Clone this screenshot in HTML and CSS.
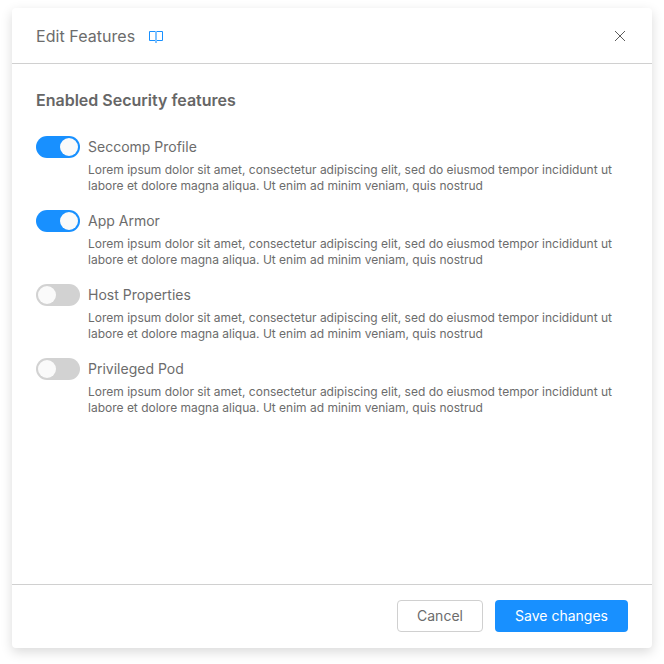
FILE: index.html
```html
<!DOCTYPE html>
<html lang="en">
<head>
<meta charset="utf-8">
<title>Edit Features</title>
<link rel="stylesheet" href="styles.css">
</head>
<body>
<section class="modal">
  <header class="modal-header">
    <h1 class="title">Edit Features</h1>
    <svg class="book" viewBox="0 0 16 16" width="16" height="16"><path d="M7 3.500H1.500v9H7M9 3.500h5.500v9H9"/><path class="spine" d="M8 3v12"/></svg>
    <svg class="close" viewBox="0 0 16 16" width="16" height="16"><path d="M3 3l10 10M13 3L3 13"/></svg>
  </header>
  <main class="modal-body">
    <h2 class="heading">Enabled Security features</h2>
    <div class="feature">
      <span class="switch on"></span>
      <div><h3 class="name">Seccomp Profile</h3><p class="text">Lorem ipsum dolor sit amet, consectetur adipiscing elit, sed do eiusmod tempor incididunt ut<br>labore et dolore magna aliqua. Ut enim ad minim veniam, quis nostrud</p></div>
    </div>
    <div class="feature">
      <span class="switch on"></span>
      <div><h3 class="name">App Armor</h3><p class="text">Lorem ipsum dolor sit amet, consectetur adipiscing elit, sed do eiusmod tempor incididunt ut<br>labore et dolore magna aliqua. Ut enim ad minim veniam, quis nostrud</p></div>
    </div>
    <div class="feature">
      <span class="switch"></span>
      <div><h3 class="name">Host Properties</h3><p class="text">Lorem ipsum dolor sit amet, consectetur adipiscing elit, sed do eiusmod tempor incididunt ut<br>labore et dolore magna aliqua. Ut enim ad minim veniam, quis nostrud</p></div>
    </div>
    <div class="feature">
      <span class="switch"></span>
      <div><h3 class="name">Privileged Pod</h3><p class="text">Lorem ipsum dolor sit amet, consectetur adipiscing elit, sed do eiusmod tempor incididunt ut<br>labore et dolore magna aliqua. Ut enim ad minim veniam, quis nostrud</p></div>
    </div>
  </main>
  <footer class="modal-footer">
    <button class="btn cancel">Cancel</button>
    <button class="btn save">Save changes</button>
  </footer>
</section>
</body>
</html>
```
FILE: styles.css
```css
* { box-sizing: border-box; margin: 0; padding: 0; }
body { min-height: 664px; padding: 8px 12px 16px; background: #fff; font-family: Inter, sans-serif; color: #6c6c6c; }
.modal { width: 640px; height: 640px; display: flex; flex-direction: column; background: #fff; border-radius: 4px; box-shadow: 0 4px 12px rgba(0,0,0,.15); }
.modal-header { height: 56px; padding: 1px 24px 0; display: flex; align-items: center; border-bottom: 1px solid #d0d0d0; }
.title { width: 99px; white-space: nowrap; font-size: 16px; line-height: 24px; font-weight: 400; letter-spacing: .05px; }
.book { margin-left: 13px; fill: none; stroke: #1890ff; stroke-width: 1; }
.spine { stroke-width: 2; stroke-opacity: .55; }
.close { margin-left: auto; fill: none; stroke: #5c5c5c; stroke-width: 1; }
.modal-body { flex: 1; padding: 24px; }
.heading { font-size: 16px; line-height: 24px; font-weight: 600; margin-bottom: 24px; color: #666; }
.feature { display: flex; gap: 8px; margin-bottom: 16px; }
.switch { flex: none; width: 44px; height: 22px; border-radius: 11px; padding: 2px; background: #d2d2d2; display: flex; }
.switch::before { content: ""; width: 18px; height: 18px; border-radius: 50%; background: #fafafa; }
.switch.on { background: #1890ff; justify-content: flex-end; }
.name { font-size: 14px; line-height: 22px; font-weight: 400; margin-bottom: 4px; }
.text { font-size: 12px; line-height: 16px; white-space: nowrap; }
.modal-footer { height: 64px; padding: 0 24px 1px; display: flex; align-items: center; justify-content: flex-end; gap: 12px; border-top: 1px solid #d0d0d0; }
.btn { height: 32px; border-radius: 4px; font: 400 14px/22px Inter, sans-serif; }
.cancel { width: 86px; background: #fff; border: 1px solid #d0d0d0; color: #6c6c6c; }
.save { width: 133px; background: #1890ff; border: 0; color: #fff; }
```
